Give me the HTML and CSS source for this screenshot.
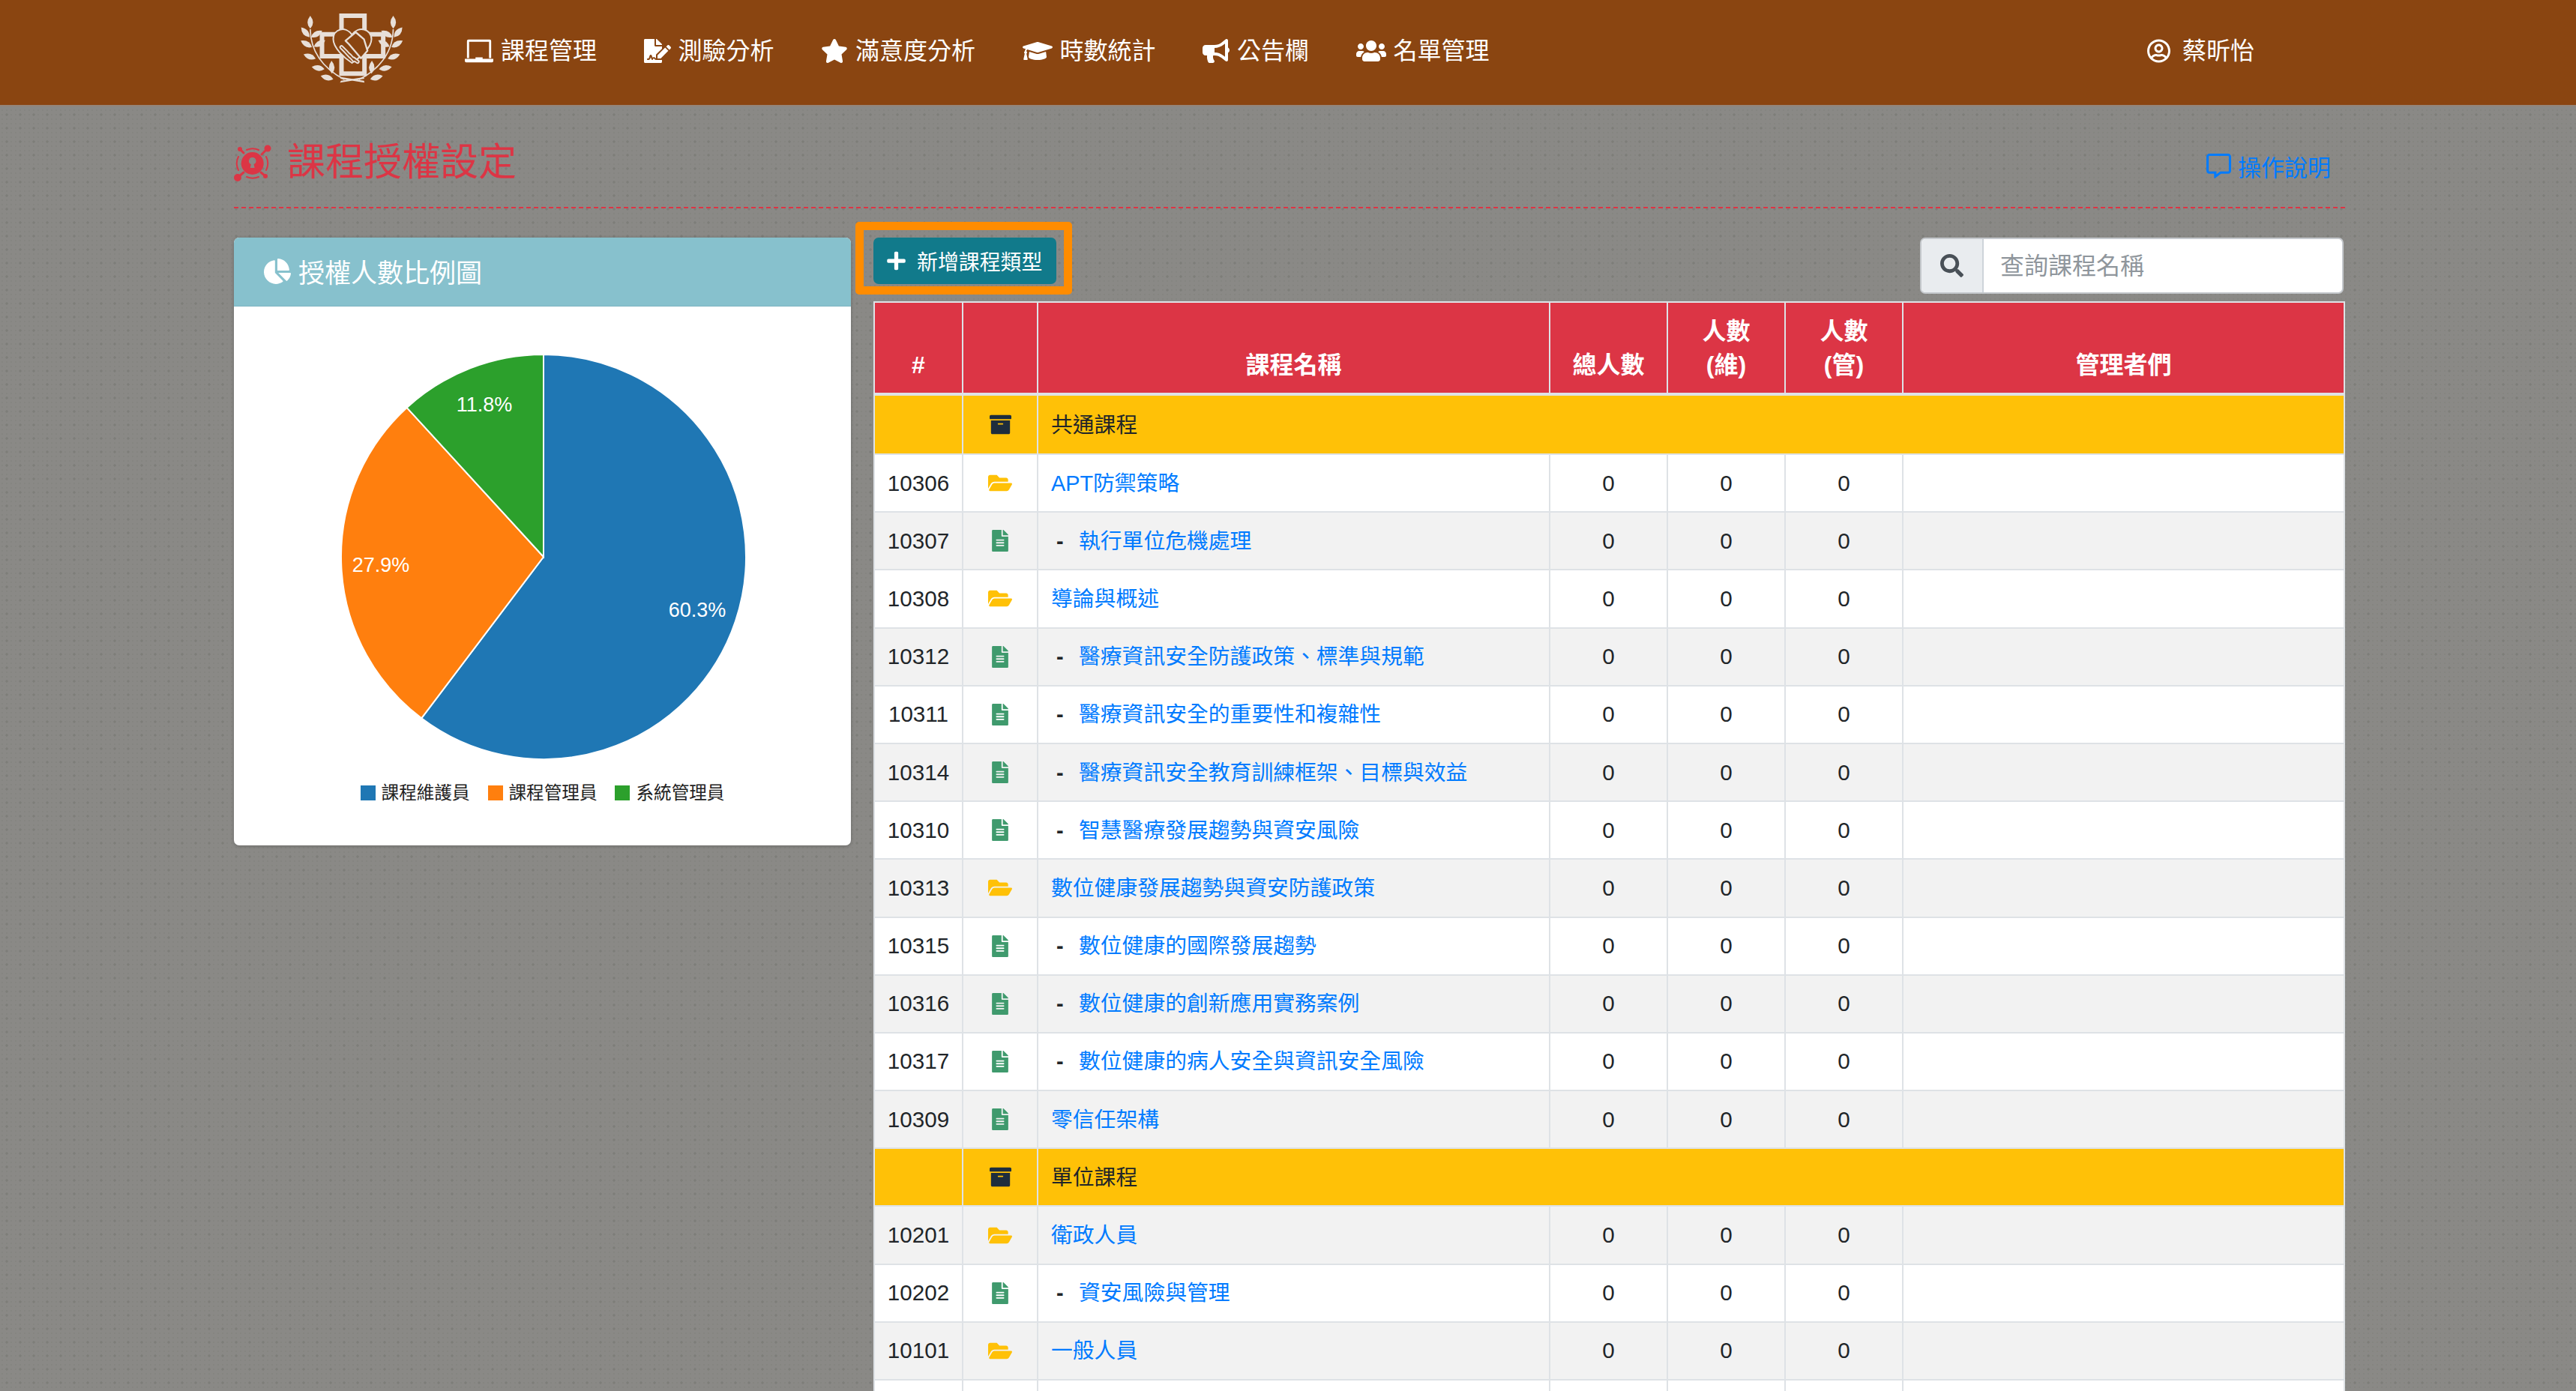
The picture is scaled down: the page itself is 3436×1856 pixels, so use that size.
FILE: index.html
```html
<!DOCTYPE html>
<html lang="zh-Hant">
<head>
  <meta charset="utf-8">
  <title>課程授權設定</title>
  <link rel="stylesheet" href="styles.css">
</head>
<body>
  <svg class="sprite" xmlns="http://www.w3.org/2000/svg">
    <symbol id="i-folder" viewBox="0 0 576 512"><path d="M572.694 292.093L500.27 416.248A63.997 63.997 0 0 1 444.989 448H45.025c-18.523 0-30.064-20.093-20.731-36.093l72.424-124.155A64 64 0 0 1 152 256h399.964c18.523 0 30.064 20.093 20.73 36.093zM152 224h328v-48c0-26.51-21.49-48-48-48H272l-64-64H48C21.49 64 0 85.49 0 112v278.046l69.077-118.418C86.214 242.25 117.989 224 152 224z"/></symbol>
    <symbol id="i-file" viewBox="0 0 384 512"><path d="M224 136V0H24C10.7 0 0 10.7 0 24v464c0 13.3 10.7 24 24 24h336c13.3 0 24-10.7 24-24V160H248c-13.2 0-24-10.8-24-24zm64 236c0 6.6-5.4 12-12 12H108c-6.6 0-12-5.4-12-12v-8c0-6.6 5.4-12 12-12h168c6.6 0 12 5.4 12 12v8zm0-64c0 6.6-5.4 12-12 12H108c-6.6 0-12-5.4-12-12v-8c0-6.6 5.4-12 12-12h168c6.6 0 12 5.4 12 12v8zm0-72v8c0 6.6-5.4 12-12 12H108c-6.6 0-12-5.4-12-12v-8c0-6.6 5.4-12 12-12h168c6.6 0 12 5.4 12 12zm96-114.1v6.1H256V0h6.1c6.4 0 12.5 2.5 17 7l97.9 98c4.5 4.5 7 10.6 7 16.9z"/></symbol>
    <symbol id="i-archive" viewBox="0 0 512 512"><path d="M32 448c0 17.7 14.3 32 32 32h384c17.7 0 32-14.3 32-32V160H32v288zm160-212c0-6.6 5.4-12 12-12h104c6.6 0 12 5.4 12 12v8c0 6.6-5.4 12-12 12H204c-6.6 0-12-5.4-12-12v-8zM480 32H32C14.3 32 0 46.3 0 64v48c0 8.8 7.2 16 16 16h480c8.8 0 16-7.2 16-16V64c0-17.7-14.3-32-32-32z"/></symbol>
  </svg>

  <header class="topbar">
    <svg class="logo" viewBox="50 45 440 300" xmlns="http://www.w3.org/2000/svg">
      <defs>
        <path id="leaf" d="M0 0Q22 -24 0 -52Q-22 -24 0 0Z"/>
        <g id="wreath">
          <path d="M103 120Q105 250 240 322" fill="none" stroke="#e8dfd8" stroke-width="5"/>
          <use href="#leaf" transform="translate(103 118)"/>
          <use href="#leaf" transform="translate(100 152) rotate(-40)"/>
          <use href="#leaf" transform="translate(106 152) rotate(60)"/>
          <use href="#leaf" transform="translate(110 192) rotate(-60)"/>
          <use href="#leaf" transform="translate(118 190) rotate(60)"/>
          <use href="#leaf" transform="translate(125 238) rotate(-70)"/>
          <use href="#leaf" transform="translate(160 280) rotate(-80)"/>
          <use href="#leaf" transform="translate(195 320) rotate(-75)"/>
          <use href="#leaf" transform="translate(190 298) rotate(-2)"/>
        </g>
      </defs>
      <g fill="#e8dfd8">
        <path d="M228 66H320V140H395V228H320V298H228V228H150V140H228Z" fill="none" stroke="#e8dfd8" stroke-width="18"/>
        <use href="#wreath"/>
        <use href="#wreath" transform="translate(538 0) scale(-1 1)"/>
        <path d="M222 318L320 334L318 326L230 312ZM222 334L320 318L316 312L226 326Z"/>
        <path d="M270 142C245 105 195 118 195 160C195 195 240 235 270 255C300 235 348 195 348 160C348 118 295 105 270 142Z" fill="#8a4511" stroke="#e8dfd8" stroke-width="6"/>
        <path d="M244 166L285 132L318 160L332 206L306 236L258 180Z" fill="#8a4511" stroke="#e8dfd8" stroke-width="7" stroke-linejoin="round"/>
        <g fill="none" stroke-linecap="round">
          <path d="M228 192L248 212M244 208L264 230M260 224L278 244M276 238L292 250" stroke="#e8dfd8" stroke-width="17"/>
          <path d="M228 192L248 212M244 208L264 230M260 224L278 244M276 238L292 250" stroke="#8a4511" stroke-width="5"/>
        </g>
      </g>
    </svg>
    <nav class="mainnav">
      <a class="navitem" href="#">
        <svg class="navicon laptop" viewBox="0 0 40 32"><path d="M5 0h30a2 2 0 0 1 2 2v24h-3V3H6v23H3V2a2 2 0 0 1 2-2zM0 27h15v-2h10v2h15v3a2 2 0 0 1-2 2H2a2 2 0 0 1-2-2z"/></svg>
        課程管理
      </a>
      <a class="navitem" href="#">
        <svg class="navicon" viewBox="0 0 576 512"><path d="M218.17 424.14c-2.95-5.92-8.09-6.52-10.17-6.52s-7.22.59-10.02 6.19l-7.67 15.34c-6.37 12.78-25.03 11.37-29.48-2.09L144 386.59l-10.61 31.88c-5.89 17.66-22.38 29.53-41 29.53H80c-8.84 0-16-7.16-16-16s7.16-16 16-16h12.39c4.83 0 9.11-3.08 10.64-7.66l18.19-54.64c3.3-9.81 12.44-16.41 22.78-16.41s19.48 6.59 22.77 16.41l13.88 41.64c19.75-16.19 54.06-9.7 66 14.16 1.89 3.78 5.49 5.95 9.36 6.26v-82.12l128-127.09V160H248c-13.2 0-24-10.8-24-24V0H24C10.7 0 0 10.7 0 24v464c0 13.3 10.7 24 24 24h336c13.3 0 24-10.7 24-24v-40l-128-.11c-16.12-.31-30.58-9.28-37.83-23.75zM384 121.9c0-6.3-2.5-12.4-7-16.9L279.1 7c-4.5-4.5-10.6-7-17-7H256v128h128v-6.1zm-96 225.06V416h68.99l161.68-162.78-67.88-67.88L288 346.96zm280.54-179.63l-31.87-31.87c-9.94-9.94-26.07-9.94-36.01 0l-27.25 27.25 67.88 67.88 27.25-27.25c9.95-9.94 9.95-26.07 0-36.01z"/></svg>
        測驗分析
      </a>
      <a class="navitem" href="#">
        <svg class="navicon" viewBox="0 0 576 512"><path d="M259.3 17.8L194 150.2 47.9 171.5c-26.2 3.8-36.7 36.1-17.7 54.6l105.7 103-25 145.5c-4.5 26.3 23.2 46 46.4 33.7L288 439.6l130.7 68.7c23.2 12.2 50.9-7.4 46.4-33.7l-25-145.5 105.7-103c19-18.5 8.5-50.8-17.7-54.6L382 150.2 316.7 17.8c-11.7-23.6-45.6-23.9-57.4 0z"/></svg>
        滿意度分析
      </a>
      <a class="navitem" href="#">
        <svg class="navicon" viewBox="0 0 640 512"><path d="M622.34 153.2L343.4 67.5c-15.2-4.67-31.6-4.67-46.79 0L17.66 153.2c-23.54 7.23-23.54 38.36 0 45.59l48.63 14.94c-10.67 13.19-17.23 29.28-17.88 46.9C38.78 266.15 32 276.11 32 288c0 10.78 5.68 19.85 13.86 25.65L20.33 428.53C18.11 438.52 25.71 448 35.94 448h56.11c10.24 0 17.84-9.48 15.62-19.47L82.14 313.65C90.32 307.85 96 298.78 96 288c0-11.57-6.47-21.25-15.66-26.87.76-15.02 8.44-28.3 20.69-36.72L296.6 284.5c9.06 2.78 26.44 6.25 46.79 0l278.95-85.7c23.55-7.24 23.55-38.36 0-45.6zM352.79 315.09c-28.53 8.76-52.84 3.92-65.59 0l-145.02-44.55L128 384c0 35.35 85.96 64 192 64s192-28.65 192-64l-14.18-113.47-145.03 44.56z"/></svg>
        時數統計
      </a>
      <a class="navitem" href="#">
        <svg class="navicon" viewBox="0 0 576 512"><path d="M576 240c0-23.63-12.95-44.04-32-55.12V32.01C544 23.26 537.02 0 512 0c-7.12 0-14.19 2.38-19.98 7.02l-85.03 68.03C364.28 109.19 310.66 128 256 128H64c-35.35 0-64 28.65-64 64v96c0 35.35 28.65 64 64 64h33.7c-1.39 10.48-2.18 21.14-2.18 32 0 39.77 9.26 77.35 25.56 110.94 5.19 10.69 16.52 17.06 28.4 17.06h74.28c26.05 0 41.69-29.84 25.9-50.56-16.4-21.52-26.15-48.36-26.15-77.44 0-11.11 1.62-21.79 4.41-32H256c54.66 0 108.28 18.81 150.98 52.95l85.03 68.03a32.023 32.023 0 0 0 19.98 7.02c24.92 0 32-22.78 32-32V295.13C563.05 284.04 576 263.63 576 240zm-96 141.42l-33.05-26.44C392.95 311.78 325.12 288 256 288v-96c69.12 0 136.95-23.78 190.95-66.98L480 98.58v282.84z"/></svg>
        公告欄
      </a>
      <a class="navitem" href="#">
        <svg class="navicon" viewBox="0 0 640 512"><path d="M96 224c35.3 0 64-28.7 64-64s-28.7-64-64-64-64 28.7-64 64 28.7 64 64 64zm448 0c35.3 0 64-28.7 64-64s-28.7-64-64-64-64 28.7-64 64 28.7 64 64 64zm32 32h-64c-17.6 0-33.5 7.1-45.1 18.6 40.3 22.1 68.9 62 75.1 109.4h66c17.7 0 32-14.3 32-32v-32c0-35.3-28.7-64-64-64zm-256 0c61.9 0 112-50.1 112-112S381.9 32 320 32 208 82.1 208 144s50.1 112 112 112zm76.8 32h-8.3c-20.8 10-43.9 16-68.5 16s-47.6-6-68.5-16h-8.3C179.6 288 128 339.6 128 403.2V432c0 26.5 21.5 48 48 48h288c26.5 0 48-21.5 48-48v-28.8c0-63.6-51.6-115.2-115.2-115.2zm-223.7-13.4C161.5 263.1 145.6 256 128 256H64c-35.3 0-64 28.7-64 64v32c0 17.7 14.3 32 32 32h65.9c6.3-47.4 34.9-87.3 75.2-109.4z"/></svg>
        名單管理
      </a>
    </nav>
    <a class="navitem usermenu" href="#">
      <svg class="navicon" viewBox="0 0 496 512"><path d="M248 104c-53 0-96 43-96 96s43 96 96 96 96-43 96-96-43-96-96-96zm0 144c-26.5 0-48-21.5-48-48s21.5-48 48-48 48 21.5 48 48-21.5 48-48 48zm0-240C111 8 0 119 0 256s111 248 248 248 248-111 248-248S385 8 248 8zm0 448c-49.7 0-95.1-18.3-130.1-48.4 14.9-23 40.4-38.6 69.6-39.5 20.8 6.4 40.6 9.6 60.5 9.6s39.7-3.1 60.5-9.6c29.2 1 54.7 16.5 69.6 39.5-35 30.1-80.4 48.4-130.1 48.4zm162.7-84.1c-24.4-31.4-62.1-51.9-105.1-51.9-10.2 0-26 9.6-57.6 9.6-31.5 0-47.4-9.6-57.6-9.6-42.9 0-80.6 20.5-105.1 51.9C61.9 339.2 48 299.2 48 256c0-110.3 89.7-200 200-200s200 89.7 200 200c0 43.2-13.9 83.2-37.3 115.9z"/></svg>
      蔡昕怡
    </a>
  </header>

  <main class="page">
    <div class="pagehead">
      <h1 class="pagetitle">
        <svg class="titleicon" viewBox="7 10 50 50">
          <g fill="none" stroke="#dc3545" stroke-linecap="round">
            <path d="M20 22L15 17M44 24L52 16M20 48L12 55M43 48L49 53" stroke-width="3"/>
            <path d="M24 18A20 20 0 0 1 40 18M50 27A20 20 0 0 1 50 45M40 54A20 20 0 0 1 24 54M13 45A20 20 0 0 1 13 27" stroke-width="2"/>
          </g>
          <g fill="#dc3545">
            <circle cx="15" cy="17" r="3"/>
            <circle cx="52" cy="16" r="4.5"/>
            <circle cx="12" cy="55" r="5"/>
            <circle cx="49" cy="53" r="3"/>
            <path fill-rule="evenodd" d="M31.7 21A15 15 0 1 1 31.7 51A15 15 0 1 1 31.7 21ZM31.7 28A4.8 4.8 0 0 0 29.8 37.2L28.8 42H34.6L33.6 37.2A4.8 4.8 0 0 0 31.7 28Z"/>
          </g>
        </svg>
        課程授權設定
      </h1>
      <a class="helplink" href="#">
        <svg class="helpicon" viewBox="0 0 512 512"><path d="M448 0H64C28.7 0 0 28.7 0 64v288c0 35.3 28.7 64 64 64h96v84c0 7.1 5.8 12 12 12 2.4 0 4.9-.7 7.1-2.4L304 416h144c35.3 0 64-28.7 64-64V64c0-35.3-28.7-64-64-64zm16 352c0 8.8-7.2 16-16 16H288l-12.8 9.6L208 428v-60H64c-8.8 0-16-7.2-16-16V64c0-8.8 7.2-16 16-16h384c8.8 0 16 7.2 16 16v288z"/></svg>
        操作說明
      </a>
    </div>

    <div class="columns">
      <section class="chartcard">
        <h2 class="cardhead">
          <svg class="cardicon" viewBox="0 0 544 512"><path d="M527.79 288H290.5l158.03 158.03c6.04 6.04 15.98 6.53 22.19.68 38.7-36.46 65.32-85.61 73.13-140.86 1.34-9.46-6.51-17.85-16.06-17.85zm-15.83-64.8C503.72 103.74 408.26 8.28 288.8.04 279.68-.59 272 7.1 272 16.24V240h223.77c9.14 0 16.82-7.68 16.19-16.8zM224 288V50.71c0-9.55-8.39-17.4-17.84-16.06C86.99 51.49-4.1 155.6.14 280.37 4.5 408.51 114.83 513.59 243.03 511.98c50.4-.63 96.97-16.87 135.26-44.03 7.9-5.6 8.42-17.23 1.57-24.08L224 288z"/></svg>
          授權人數比例圖
        </h2>
        <svg class="pie" viewBox="0 0 823 620">
          <g stroke="#fff" stroke-width="2">
            <path fill="#1f77b4" d="M413 334V64A270 270 0 1 1 250.2 549.4Z"/>
            <path fill="#ff7f0e" d="M413 334L250.2 549.4A270 270 0 0 1 230.6 134.9Z"/>
            <path fill="#2ca02c" d="M413 334L230.6 134.9A270 270 0 0 1 413 64Z"/>
          </g>
          <g class="pielabels">
            <text x="618" y="405">60.3%</text>
            <text x="196" y="345">27.9%</text>
            <text x="334" y="131">11.8%</text>
          </g>
        </svg>
        <ul class="legend">
          <li><span class="swatch blue"></span>課程維護員</li>
          <li><span class="swatch orange"></span>課程管理員</li>
          <li><span class="swatch green"></span>系統管理員</li>
        </ul>
      </section>

      <section class="listcol">
        <div class="toolbar">
          <div class="addwrap">
            <button class="addbtn" type="button">
              <svg class="plus" viewBox="0 0 448 512"><path d="M416 208H272V64c0-17.67-14.33-32-32-32h-32c-17.67 0-32 14.33-32 32v144H32c-17.67 0-32 14.33-32 32v32c0 17.67 14.33 32 32 32h144v144c0 17.67 14.33 32 32 32h32c17.67 0 32-14.33 32-32V304h144c17.67 0 32-14.33 32-32v-32c0-17.67-14.33-32-32-32z"/></svg>
              新增課程類型
            </button>
            <span class="highlight"></span>
          </div>
          <div class="searchbox">
            <span class="searchicon">
              <svg viewBox="0 0 512 512"><path d="M505 442.7L405.3 343c-4.5-4.5-10.6-7-17-7H372c27.6-35.3 44-79.7 44-128C416 93.1 322.9 0 208 0S0 93.1 0 208s93.1 208 208 208c48.3 0 92.7-16.4 128-44v16.3c0 6.4 2.5 12.5 7 17l99.7 99.7c9.4 9.4 24.6 9.4 33.9 0l28.3-28.3c9.4-9.4 9.4-24.6.1-34zM208 336c-70.7 0-128-57.2-128-128 0-70.7 57.2-128 128-128 70.7 0 128 57.2 128 128 0 70.7-57.2 128-128 128z"/></svg>
            </span>
            <input class="searchinput" type="text" placeholder="查詢課程名稱">
          </div>
        </div>

        <table class="courses">
          <colgroup>
            <col class="c-id"><col class="c-icon"><col class="c-name"><col class="c-num"><col class="c-num"><col class="c-num"><col class="c-admin">
          </colgroup>
          <thead>
            <tr><th>#</th><th></th><th>課程名稱</th><th>總人數</th><th>人數<br>(維)</th><th>人數<br>(管)</th><th>管理者們</th></tr>
          </thead>
          <tbody>
            <tr class="group first"><td></td><td class="ic"><svg class="archive"><use href="#i-archive"/></svg></td><td class="name" colspan="5">共通課程</td></tr>
            <tr><td class="id">10306</td><td class="ic"><svg class="folder"><use href="#i-folder"/></svg></td><td class="name"><a href="#">APT防禦策略</a></td><td class="n">0</td><td class="n">0</td><td class="n">0</td><td></td></tr>
            <tr><td class="id">10307</td><td class="ic"><svg class="file"><use href="#i-file"/></svg></td><td class="name"><span class="dash">-</span><a href="#">執行單位危機處理</a></td><td class="n">0</td><td class="n">0</td><td class="n">0</td><td></td></tr>
            <tr><td class="id">10308</td><td class="ic"><svg class="folder"><use href="#i-folder"/></svg></td><td class="name"><a href="#">導論與概述</a></td><td class="n">0</td><td class="n">0</td><td class="n">0</td><td></td></tr>
            <tr><td class="id">10312</td><td class="ic"><svg class="file"><use href="#i-file"/></svg></td><td class="name"><span class="dash">-</span><a href="#">醫療資訊安全防護政策、標準與規範</a></td><td class="n">0</td><td class="n">0</td><td class="n">0</td><td></td></tr>
            <tr><td class="id">10311</td><td class="ic"><svg class="file"><use href="#i-file"/></svg></td><td class="name"><span class="dash">-</span><a href="#">醫療資訊安全的重要性和複雜性</a></td><td class="n">0</td><td class="n">0</td><td class="n">0</td><td></td></tr>
            <tr><td class="id">10314</td><td class="ic"><svg class="file"><use href="#i-file"/></svg></td><td class="name"><span class="dash">-</span><a href="#">醫療資訊安全教育訓練框架、目標與效益</a></td><td class="n">0</td><td class="n">0</td><td class="n">0</td><td></td></tr>
            <tr><td class="id">10310</td><td class="ic"><svg class="file"><use href="#i-file"/></svg></td><td class="name"><span class="dash">-</span><a href="#">智慧醫療發展趨勢與資安風險</a></td><td class="n">0</td><td class="n">0</td><td class="n">0</td><td></td></tr>
            <tr><td class="id">10313</td><td class="ic"><svg class="folder"><use href="#i-folder"/></svg></td><td class="name"><a href="#">數位健康發展趨勢與資安防護政策</a></td><td class="n">0</td><td class="n">0</td><td class="n">0</td><td></td></tr>
            <tr><td class="id">10315</td><td class="ic"><svg class="file"><use href="#i-file"/></svg></td><td class="name"><span class="dash">-</span><a href="#">數位健康的國際發展趨勢</a></td><td class="n">0</td><td class="n">0</td><td class="n">0</td><td></td></tr>
            <tr><td class="id">10316</td><td class="ic"><svg class="file"><use href="#i-file"/></svg></td><td class="name"><span class="dash">-</span><a href="#">數位健康的創新應用實務案例</a></td><td class="n">0</td><td class="n">0</td><td class="n">0</td><td></td></tr>
            <tr><td class="id">10317</td><td class="ic"><svg class="file"><use href="#i-file"/></svg></td><td class="name"><span class="dash">-</span><a href="#">數位健康的病人安全與資訊安全風險</a></td><td class="n">0</td><td class="n">0</td><td class="n">0</td><td></td></tr>
            <tr><td class="id">10309</td><td class="ic"><svg class="file"><use href="#i-file"/></svg></td><td class="name"><a href="#">零信任架構</a></td><td class="n">0</td><td class="n">0</td><td class="n">0</td><td></td></tr>
            <tr class="group"><td></td><td class="ic"><svg class="archive"><use href="#i-archive"/></svg></td><td class="name" colspan="5">單位課程</td></tr>
            <tr><td class="id">10201</td><td class="ic"><svg class="folder"><use href="#i-folder"/></svg></td><td class="name"><a href="#">衛政人員</a></td><td class="n">0</td><td class="n">0</td><td class="n">0</td><td></td></tr>
            <tr><td class="id">10202</td><td class="ic"><svg class="file"><use href="#i-file"/></svg></td><td class="name"><span class="dash">-</span><a href="#">資安風險與管理</a></td><td class="n">0</td><td class="n">0</td><td class="n">0</td><td></td></tr>
            <tr><td class="id">10101</td><td class="ic"><svg class="folder"><use href="#i-folder"/></svg></td><td class="name"><a href="#">一般人員</a></td><td class="n">0</td><td class="n">0</td><td class="n">0</td><td></td></tr>
            <tr><td></td><td></td><td></td><td></td><td></td><td></td><td></td></tr>
          </tbody>
        </table>
      </section>
    </div>
  </main>
</body>
</html>
```

FILE: styles.css
```css
html, body {
  margin: 0;
  height: 100%;
  overflow: hidden;
}

body {
  font-family: "Liberation Sans", "Noto Sans CJK TC", sans-serif;
  font-size: 28.8px;
  color: #212529;
  background-color: #8a8986;
  background-image:
    radial-gradient(circle, rgba(110, 110, 105, 0.35) 1.5px, transparent 2px),
    radial-gradient(circle, rgba(120, 120, 115, 0.25) 1px, transparent 1.5px);
  background-size: 18px 18px, 6px 6px;
}

a {
  text-decoration: none;
}

.sprite {
  display: none;
}

/* top bar */
.topbar {
  display: flex;
  align-items: center;
  box-sizing: content-box;
  height: 135px;
  padding: 0 429px 5px 399px;
  background-color: #8a4511;
  border-bottom: 2px solid #94857a;
}

.logo {
  width: 147px;
  height: 100px;
  margin: -8px 77px 0 -3px;
  flex: none;
}

.mainnav {
  display: flex;
  gap: 62.5px;
}

.navitem {
  display: flex;
  align-items: center;
  gap: 10px;
  color: #fff;
  font-size: 32px;
  line-height: 40px;
  white-space: nowrap;
}

.navicon {
  height: 32px;
  width: auto;
  fill: #fff;
  flex: none;
}

.navicon.laptop {
  width: 38px;
}

.usermenu {
  margin-left: auto;
  gap: 16px;
}

/* page */
.page {
  width: 2816px;
  margin-left: 312px;
}

.pagehead {
  display: flex;
  align-items: center;
  justify-content: space-between;
  box-sizing: border-box;
  height: 136px;
  padding: 16px 19px 0 0;
  border-bottom: 2px dashed #dc3545;
}

.pagetitle {
  display: flex;
  align-items: center;
  gap: 21px;
  margin: 0;
  color: #dc3545;
  font-size: 51px;
  font-weight: 400;
  line-height: 60px;
}

.titleicon {
  width: 50px;
  height: 50px;
}

.helplink {
  display: flex;
  align-items: center;
  gap: 9px;
  padding-top: 9px;
  color: #007bff;
  font-size: 31px;
}

.helpicon {
  width: 33px;
  height: 33px;
  fill: #007bff;
}

.columns {
  display: flex;
  align-items: flex-start;
  gap: 30px;
  margin-top: 39px;
}

/* chart card */
.chartcard {
  flex: none;
  width: 823px;
  height: 811px;
  background: #fff;
  border-radius: 7px;
  overflow: hidden;
  box-shadow: 0 1px 4px rgba(0, 0, 0, 0.25);
}

.cardhead {
  display: flex;
  align-items: center;
  gap: 10px;
  box-sizing: border-box;
  height: 92px;
  margin: 0;
  padding: 0 0 2px 40px;
  color: #fff;
  background: #87c1cd;
  border-bottom: 1px solid #7db5c1;
  font-size: 35px;
  font-weight: 400;
}

.cardicon {
  width: 36px;
  height: 34px;
  fill: #fff;
}

.pie {
  display: block;
  width: 823px;
  height: 620px;
}

.pielabels text {
  fill: #fff;
  font-size: 27px;
  text-anchor: middle;
  dominant-baseline: central;
}

.legend {
  display: flex;
  justify-content: center;
  gap: 24px;
  margin: 14px 0 0;
  padding: 0;
  list-style: none;
  font-size: 23.6px;
  line-height: 30px;
  color: #222;
}

.legend li {
  display: flex;
  align-items: center;
  gap: 8px;
}

.swatch {
  width: 20px;
  height: 20px;
}

.swatch.blue { background: #1f77b4; }
.swatch.orange { background: #ff7f0e; }
.swatch.green { background: #2ca02c; }

/* right column */
.listcol {
  flex: none;
  width: 1961px;
}

.toolbar {
  display: flex;
  justify-content: space-between;
  align-items: flex-start;
  height: 85px;
}

.addwrap {
  position: relative;
}

.addbtn {
  display: flex;
  align-items: center;
  gap: 15px;
  width: 244px;
  height: 62px;
  padding: 0 0 0 18px;
  color: #fff;
  background: #117a8b;
  border: none;
  border-radius: 7px;
  font-family: inherit;
  font-size: 27.9px;
}

.plus {
  width: 25px;
  height: 28px;
  fill: #fff;
}

.highlight {
  position: absolute;
  left: -24px;
  top: -21px;
  width: 289px;
  height: 97px;
  box-sizing: border-box;
  border: 11px solid #ff8c00;
  border-radius: 5px;
}

.searchbox {
  display: flex;
  box-sizing: border-box;
  width: 565px;
  height: 75px;
  background: #fff;
  border: 2px solid #c4c8cc;
  border-radius: 7px;
  overflow: hidden;
}

.searchicon {
  display: flex;
  align-items: center;
  justify-content: center;
  width: 81px;
  background: #e9ecef;
  border-right: 2px solid #ced4da;
}

.searchicon svg {
  width: 31px;
  height: 31px;
  fill: #495057;
}

.searchinput {
  flex: 1;
  min-width: 0;
  padding: 2px 22px 0;
  border: none;
  outline: none;
  background: transparent;
  font-family: inherit;
  font-size: 32px;
}

.searchinput::placeholder {
  color: #8f969c;
  opacity: 1;
}

/* course table */
.courses {
  width: 1961px;
  table-layout: fixed;
  border-collapse: collapse;
  background: #fff;
}

.c-id { width: 118px; }
.c-icon { width: 100px; }
.c-name { width: 683px; }
.c-num { width: 157px; }
.c-admin { width: 589px; }

.courses th,
.courses td {
  border: 2px solid #dee2e6;
}

.courses th {
  padding: 16px 8px 14px;
  color: #fff;
  background: #dc3545;
  font-size: 32px;
  font-weight: 700;
  line-height: 45px;
  text-align: center;
  vertical-align: bottom;
}

.courses thead tr {
  border-bottom: 4px solid #dee2e6;
}

.courses tbody tr {
  height: 77.2px;
}

.courses tbody tr:nth-child(odd) {
  background: #f2f2f2;
}

.courses td {
  padding: 0;
  line-height: 40px;
  vertical-align: middle;
}

.courses tbody tr.group {
  background: #ffc107;
  height: 77.2px;
}

.courses tbody tr.group.first {
  height: 80px;
}

.courses td.id {
  font-size: 29.6px;
  text-align: center;
}

.courses td.n {
  font-size: 29.6px;
  text-align: center;
}

.courses td.ic svg {
  display: block;
  margin: 0 auto;
}

.courses td.name {
  padding-left: 17px;
}

.courses a {
  color: #007bff;
}

.dash {
  display: inline-block;
  width: 37px;
  padding-left: 7px;
  box-sizing: border-box;
  font-weight: 700;
}

.folder {
  width: 32px;
  height: 29px;
  fill: #ffc107;
}

.file {
  width: 22px;
  height: 29px;
  fill: #3f9a6d;
}

.archive {
  width: 29px;
  height: 29px;
  fill: #1e2d3d;
}
```
